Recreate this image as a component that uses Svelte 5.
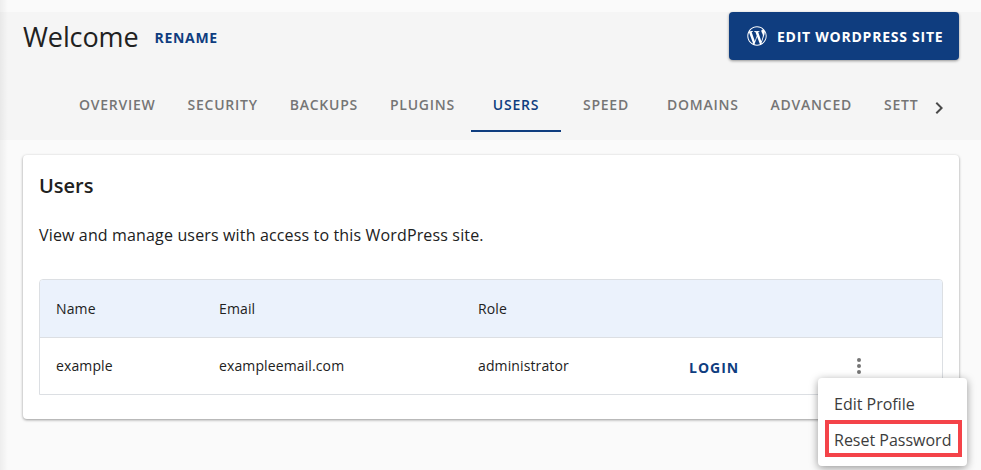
<script>
  const tabs = ['Overview', 'Security', 'Backups', 'Plugins', 'Users', 'Speed', 'Domains', 'Advanced', 'Settings'];
  const active = 'Users';
</script>

<div class="page">
  <div class="edge"></div>
  <header class="head">
    <div class="title-row">
      <div class="title">
        <h1>Welcome</h1>
        <button class="link rename">Rename</button>
      </div>
      <button class="edit">
        <svg viewBox="0 0 512 512" width="20" height="20" fill="#fff" aria-hidden="true">
          <path d="M256 8C119.3 8 8 119.2 8 256c0 136.7 111.3 248 248 248s248-111.3 248-248C504 119.2 392.7 8 256 8zM33 256c0-32.3 6.9-63 19.3-90.7l106.4 291.4C84.3 420.5 33 344.2 33 256zm223 223c-21.9 0-43-3.2-63-9.1l66.9-194.4 68.5 187.8c.5 1.1 1 2.1 1.6 3.1-23.1 8.1-48 12.6-74 12.6zm30.7-327.5c13.4-.7 25.5-2.1 25.5-2.1 12-1.4 10.6-19.1-1.4-18.4 0 0-36.1 2.8-59.4 2.8-21.9 0-58.7-2.8-58.7-2.8-12-.7-13.4 17.7-1.4 18.4 0 0 11.4 1.4 23.4 2.1l34.7 95.2L200.6 393l-81.2-241.5c13.4-.7 25.5-2.1 25.5-2.1 12-1.4 10.6-19.1-1.4-18.4 0 0-36.1 2.8-59.4 2.8-4.2 0-9.1-.1-14.4-.3C109.6 73 178.1 33 256 33c58 0 110.9 22.2 150.6 58.5-1-.1-1.9-.2-2.9-.2-21.9 0-37.4 19.1-37.4 39.6 0 18.4 10.6 33.9 21.9 52.3 8.5 14.8 18.4 33.9 18.4 61.5 0 19.1-7.3 41.2-17 72.1l-22.2 74.3-80.7-240.1zm81.4 297.2l68.1-196.9c12.7-31.8 17-57.2 17-79.9 0-8.2-.5-15.8-1.5-22.9 17.4 31.8 27.3 68.2 27.3 107 0 82.3-44.6 154.1-110.9 192.7z"/>
        </svg>
        Edit WordPress Site
      </button>
    </div>
    <nav class="tabs">
      <div class="tab-list">
        {#each tabs as tab}
          <span class="tab" class:active={tab === active}>{tab}</span>
        {/each}
      </div>
      <svg class="next" viewBox="0 0 24 24" width="24" height="24" fill="#4a4a4a" aria-hidden="true">
        <path d="M10 6 8.6 7.4 13.2 12l-4.6 4.6L10 18l6-6z"/>
      </svg>
    </nav>
  </header>

  <main class="content">
    <section class="card">
      <h2>Users</h2>
      <p>View and manage users with access to this WordPress site.</p>
      <div class="table">
        <div class="row thead">
          <span>Name</span>
          <span>Email</span>
          <span>Role</span>
        </div>
        <div class="row entry">
          <span>example</span>
          <span>exampleemail.com</span>
          <span>administrator</span>
          <button class="link login">Login</button>
          <span class="dots"><i></i><i></i><i></i></span>
        </div>
      </div>
    </section>
  </main>

  <div class="menu">
    <div class="item">Edit Profile</div>
    <div class="item marked">Reset Password</div>
  </div>
</div>

<style>
  :global(body) {
    margin: 0;
    background: #fafafa;
    font-family: "Open Sans", "Noto Sans", sans-serif;
    color: #212121;
  }

  .page {
    position: relative;
    width: 981px;
    height: 470px;
    overflow: hidden;
    padding-top: 12px;
    box-sizing: border-box;
    background: #fafafa;
  }

  .edge {
    position: absolute;
    top: 0;
    left: 0;
    bottom: 0;
    width: 8px;
    background: linear-gradient(to right, rgba(0, 0, 0, 0.05), rgba(0, 0, 0, 0));
  }

  .head {
    height: 128px;
    background: #f5f5f5;
    box-sizing: border-box;
    padding: 0 22px 0 23px;
  }

  .title-row {
    display: flex;
    justify-content: space-between;
    align-items: flex-start;
  }

  .title {
    display: flex;
    align-items: center;
    gap: 16px;
    height: 50px;
  }

  h1 {
    margin: 0;
    font-size: 27px;
    font-weight: 400;
    letter-spacing: -0.1px;
    line-height: 50px;
  }

  button {
    font-family: inherit;
    border: 0;
    background: none;
    padding: 0;
    text-transform: uppercase;
    font-weight: 700;
  }

  .link {
    color: #0f3d7f;
    font-size: 14px;
    letter-spacing: 0.7px;
  }

  .edit {
    display: flex;
    align-items: center;
    gap: 10px;
    width: 230px;
    height: 48px;
    padding-left: 18px;
    box-sizing: border-box;
    background: #0f3d7f;
    color: #fff;
    border-radius: 4px;
    font-size: 14px;
    letter-spacing: 0.75px;
    box-shadow: 0 1px 3px rgba(0, 0, 0, 0.4);
  }

  .tabs {
    display: flex;
    align-items: center;
    margin-left: 40px;
    margin-right: -12px;
    margin-top: 22px;
  }

  .tab-list {
    display: flex;
    width: 856px;
    overflow: hidden;
  }

  .tab {
    flex: none;
    box-sizing: border-box;
    min-width: 90px;
    height: 48px;
    padding: 0 16px;
    line-height: 42px;
    text-align: center;
    text-transform: uppercase;
    font-size: 14px;
    font-weight: 600;
    letter-spacing: 0.75px;
    color: #757575;
  }

  .tab.active {
    color: #0f3d7f;
    border-bottom: 2px solid #0f3d7f;
  }

  .next {
    margin-left: 8px;
  }

  .content {
    padding: 15px 22px 0 23px;
  }

  .card {
    height: 264px;
    box-sizing: border-box;
    padding: 16px 16px 0;
    background: #fff;
    border-radius: 4px;
    box-shadow: 0 1px 3px rgba(0, 0, 0, 0.4);
  }

  h2 {
    margin: 0;
    font-size: 20px;
    font-weight: 600;
    line-height: 30px;
  }

  p {
    margin: 22px 0 0;
    font-size: 16px;
    letter-spacing: 0.15px;
    line-height: 24px;
    color: #212121;
  }

  .table {
    margin-top: 32px;
    border: 1px solid #dcdfe3;
    border-radius: 4px 4px 0 0;
    font-size: 14px;
    letter-spacing: 0.12px;
  }

  .row {
    display: grid;
    grid-template-columns: 163px 259px 211px 168px 1fr;
    align-items: center;
    height: 56px;
    padding-left: 16px;
  }

  .thead {
    height: 57px;
    background: #ebf2fc;
    border-bottom: 1px solid #dcdfe3;
    border-radius: 3px 3px 0 0;
  }

  .entry {
    box-sizing: border-box;
    padding-bottom: 1px;
  }

  .login {
    justify-self: start;
    margin-top: 3px;
    font-size: 14px;
    letter-spacing: 1px;
  }

  .dots {
    display: flex;
    flex-direction: column;
    gap: 2px;
    width: 4px;
    margin-top: 1px;
  }

  .dots i {
    width: 4px;
    height: 4px;
    border-radius: 50%;
    background: #757575;
  }

  .menu {
    position: absolute;
    left: 818px;
    top: 378px;
    width: 149px;
    height: 88px;
    box-sizing: border-box;
    padding-top: 8px;
    background: #fff;
    border-radius: 4px;
    box-shadow: 0 2px 8px rgba(0, 0, 0, 0.4);
    font-size: 16px;
    color: #3c3c3c;
  }

  .item {
    height: 36px;
    line-height: 36px;
    padding-left: 16px;
  }

  .marked {
    height: 37px;
    margin: -2px 5px 0 7px;
    padding-left: 5px;
    box-sizing: border-box;
    line-height: 32px;
    border: 4px solid #f44349;
  }
</style>
